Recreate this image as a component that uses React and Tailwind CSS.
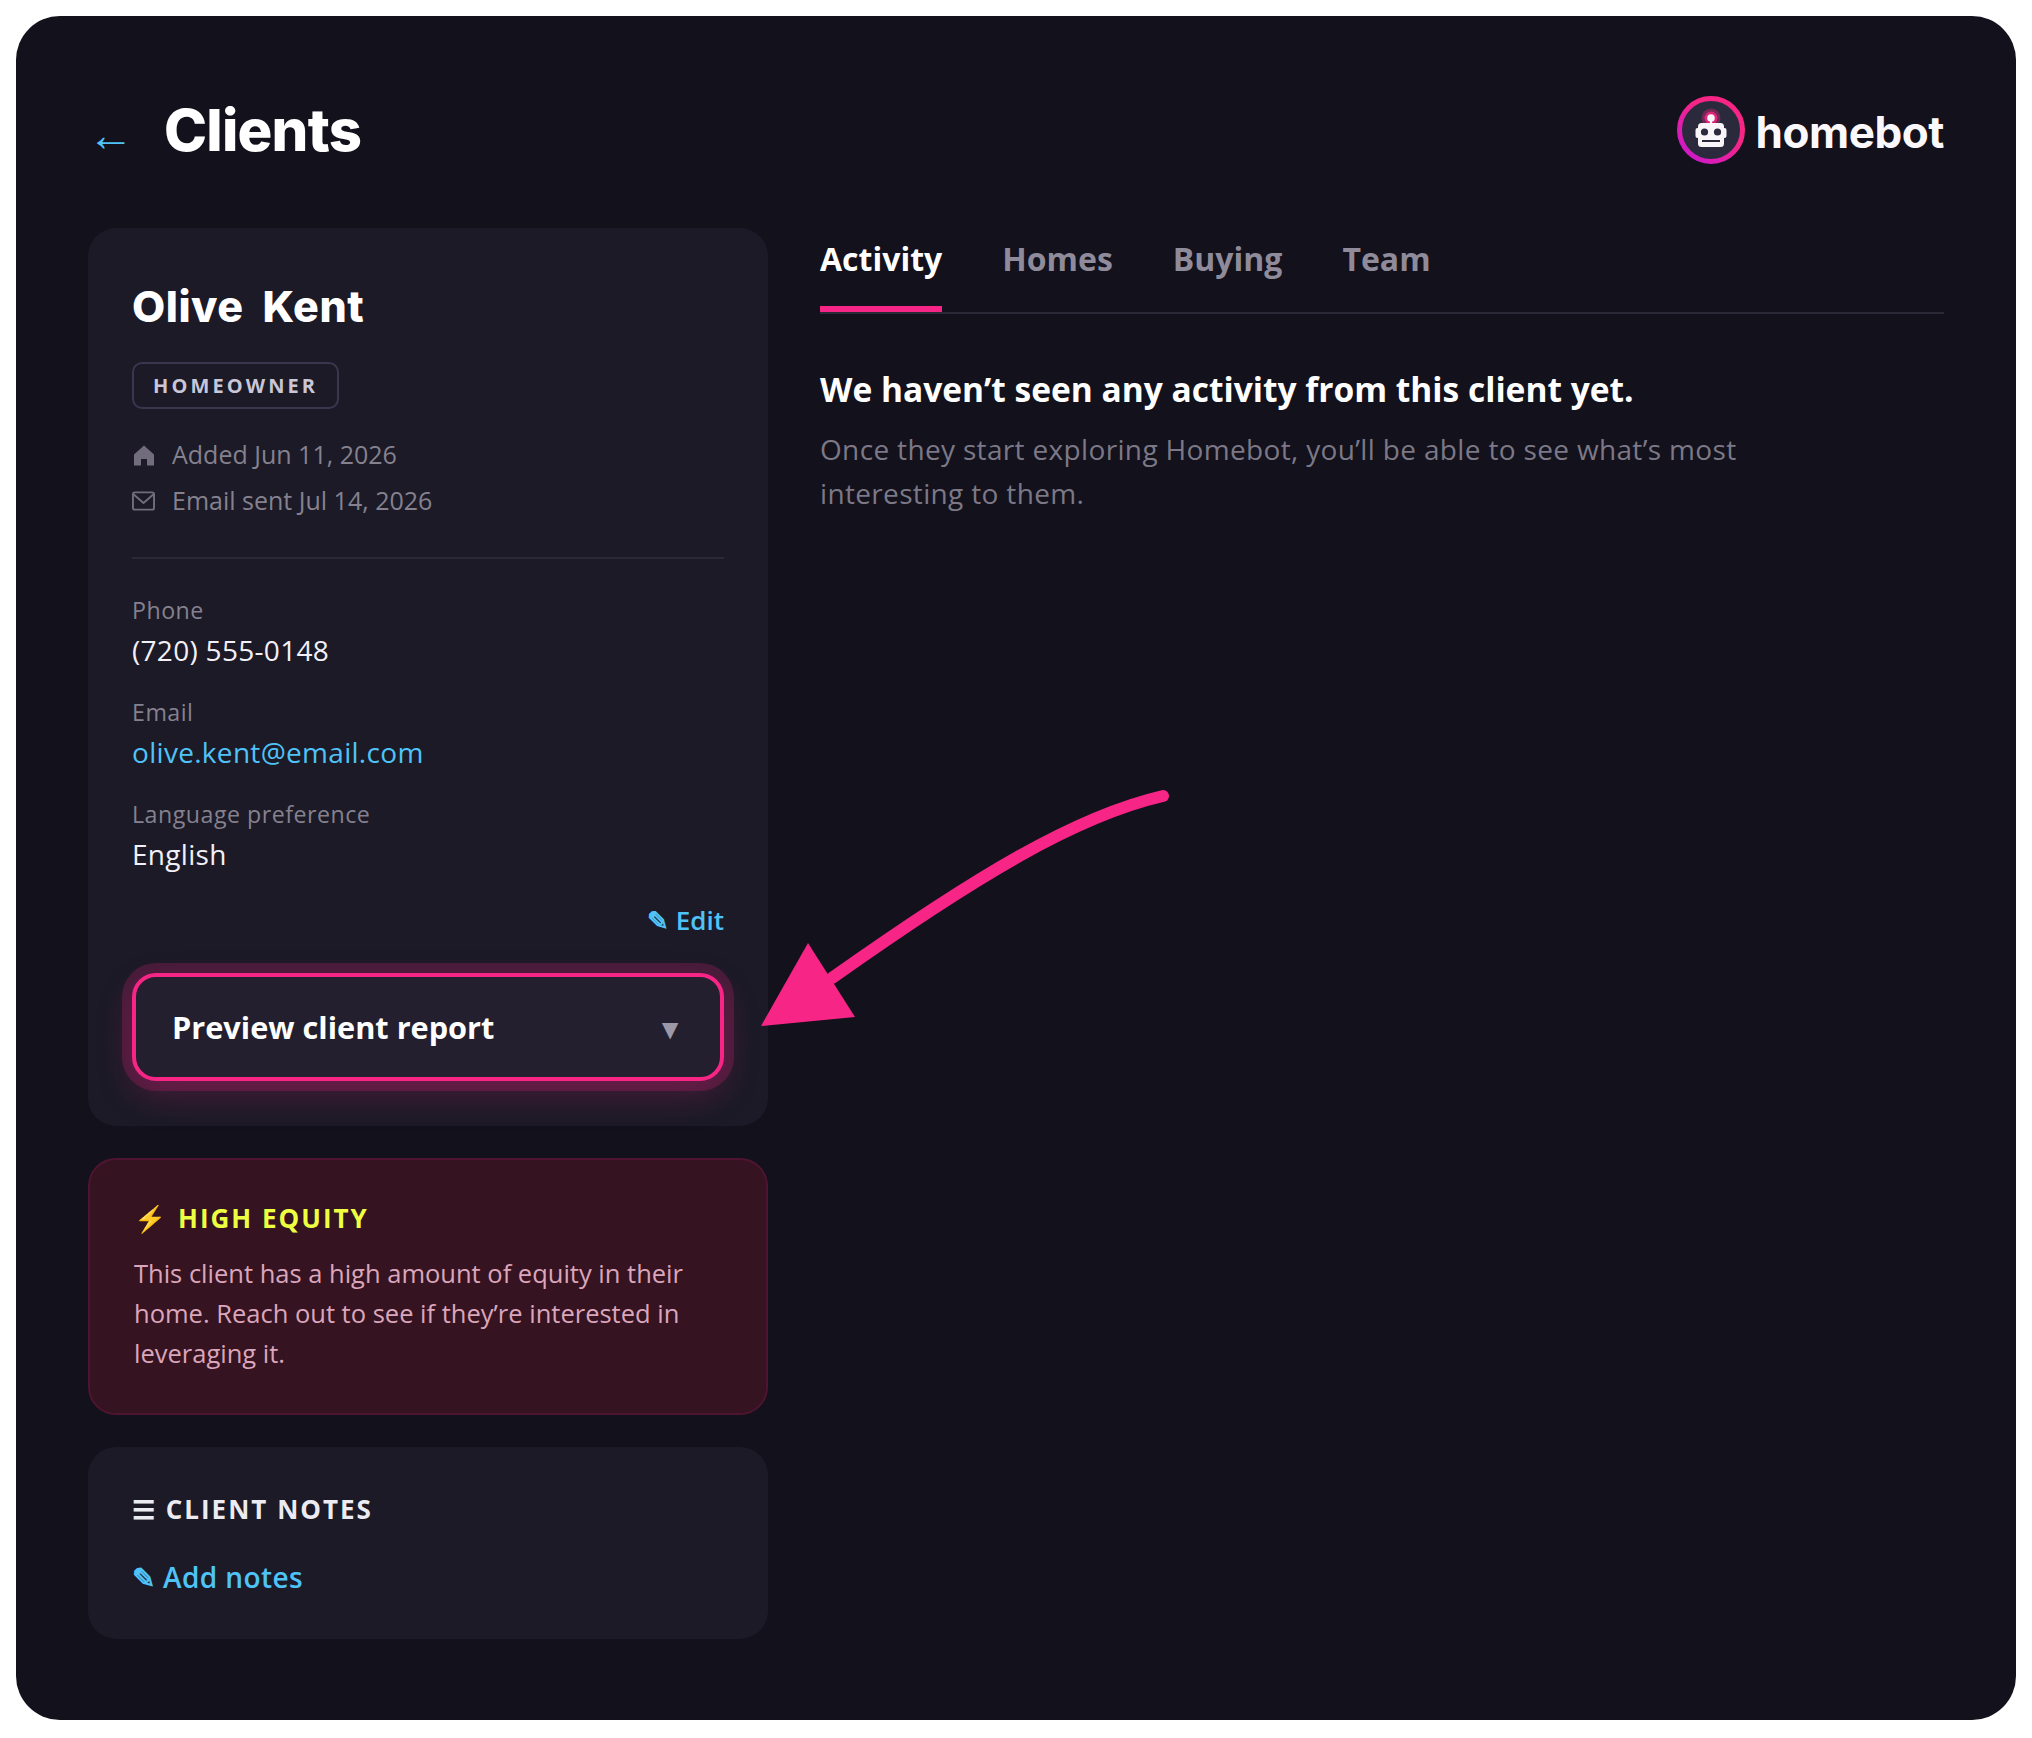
const body = "font-['Open_Sans',sans-serif]";
const display = "font-['Inter',sans-serif]";

function Logo() {
  return (
    <div className="flex items-center gap-[11px]">
      <svg width="68" height="68" viewBox="0 0 68 68">
        <defs>
          <linearGradient id="ring" x1="0.85" y1="0.15" x2="0.2" y2="0.9">
            <stop offset="0.35" stopColor="#f72585" />
            <stop offset="1" stopColor="#d11ac4" />
          </linearGradient>
        </defs>
        <circle cx="34" cy="34" r="31.5" fill="#2b2a3d" stroke="url(#ring)" strokeWidth="5" />
        <circle cx="34" cy="22" r="9.5" fill="#f72585" opacity="0.35" />
        <circle cx="34" cy="22" r="6.5" fill="#f72585" opacity="0.8" />
        <rect x="33" y="22" width="2" height="7" fill="#f8f4f8" />
        <circle cx="34" cy="22" r="3.8" fill="#f8f4f8" />
        <rect x="21" y="27" width="26" height="24" rx="3.5" fill="#f8f4f8" />
        <rect x="18.5" y="32" width="31" height="10" rx="2" fill="#f8f4f8" />
        <circle cx="27.5" cy="36" r="3.6" fill="#2b2a3d" />
        <circle cx="40.5" cy="36" r="3.6" fill="#2b2a3d" />
        <rect x="25" y="44" width="18" height="2" fill="#2b2a3d" />
      </svg>
      <span className={`${display} mt-[3px] text-[44px] leading-none font-bold text-[#fbf8fb] tracking-[-0.45px]`}>homebot</span>
    </div>
  );
}

function Field({ label, children, valueClass = "text-[#f2f0f6]" }) {
  return (
    <div className="flex flex-col">
      <span className="text-[23.2px] leading-[36px] tracking-[0.5px] text-[#85818f]">{label}</span>
      <span className={`text-[28px] leading-[45px] tracking-[0.3px] ${valueClass}`}>{children}</span>
    </div>
  );
}

export default function App() {
  return (
    <div className={`${body} min-h-screen bg-white p-4`}>
      <div className="relative h-[1704px] w-[2000px] rounded-[44px] bg-[#12111c] px-[72px] pt-[64px]">
        <header className="flex h-[100px] items-center justify-between">
          <div className="flex items-center gap-[30px]">
            <span className="mt-[6px] text-[46px] leading-none text-[#4fc3f7]">←</span>
            <h1 className={`${display} text-[58px] leading-none font-extrabold tracking-[-0.8px] text-white`}>Clients</h1>
          </div>
          <Logo />
        </header>

        <div className="mt-[48px] grid grid-cols-[680px_1fr] gap-[52px]">
          <div className="flex flex-col gap-[32px]">
            <section className="h-[898px] rounded-[28px] bg-[#1b1a26] px-[44px] pt-[50px]">
              <h2 className={`${display} text-[43px] leading-[56px] font-extrabold tracking-[0.5px] [word-spacing:9px] text-white`}>Olive Kent</h2>
              <span className="mt-[28px] inline-block h-[47px] rounded-[10px] border-2 border-[#3a3650] px-[19px] text-[20px] leading-[43px] font-bold tracking-[3.1px] text-[#c9c6d8]">
                HOMEOWNER
              </span>
              <div className="mt-[23px] flex flex-col text-[#85818f]">
                <div className="flex h-[46px] items-center gap-[17px] text-[25px]">
                  <span className="flex w-[23px] justify-center">
                    <svg width="22" height="21" viewBox="0 0 22 21" fill="#716d7c">
                      <path d="M11 0.5 21 9.5 V20.5 H14 V14 H8 V20.5 H1 V9.5 Z" />
                    </svg>
                  </span>
                  Added Jun 11, 2026
                </div>
                <div className="flex h-[46px] items-center gap-[17px] text-[25px]">
                  <svg width="24" height="20" viewBox="0 0 24 20" fill="none" stroke="#716d7c" strokeWidth="2" className="w-[23px]">
                    <rect x="1" y="1" width="22" height="18" rx="2" />
                    <path d="M1.5 3 12 12 22.5 3" />
                  </svg>
                  Email sent Jul 14, 2026
                </div>
              </div>
              <div className="mt-[33px] border-t-2 border-[#2b2938] pt-[33px]">
                <div className="flex flex-col gap-[21px]">
                  <Field label="Phone">(720) 555-0148</Field>
                  <Field label="Email" valueClass="text-[#4fc3f7]">olive.kent@email.com</Field>
                  <Field label="Language preference">English</Field>
                </div>
                <div className="mt-[25px] flex justify-end text-[26px] leading-[36px] font-semibold text-[#4fc3f7]">✎ Edit</div>
              </div>
              <button className="mt-[35px] flex h-[108px] w-[592px] items-center justify-between rounded-[24px] border-4 border-[#f72585] bg-[#231f2e] pr-[36px] pl-[36px] shadow-[0_0_0_10px_rgba(247,37,133,0.2),0_14px_36px_rgba(247,37,133,0.22)]">
                <span className="mt-[1px] text-[30.7px] font-bold text-white">Preview client report</span>
                <span className="mt-[2px] text-[28px] text-[#9c98a8]">▼</span>
              </button>
            </section>

            <section className="h-[257px] rounded-[28px] border-2 border-[#4f1530] bg-[#351320] px-[44px] pt-[38px]">
              <div className="flex items-center gap-[10px] text-[26px] leading-[40px] font-bold tracking-[2px] text-[#eeff41]">
                <span>⚡</span>
                <span>HIGH EQUITY</span>
              </div>
              <p className="mt-[15px] text-[25.5px] leading-[40px] text-[#dba6bb]">
                This client has a high amount of equity in their home. Reach out to see if they’re interested in leveraging it.
              </p>
            </section>

            <section className="h-[192px] rounded-[28px] bg-[#1b1a26] px-[44px] pt-[42px]">
              <div className="text-[26px] leading-[40px] font-bold tracking-[2px] text-[#ecebf2]">☰ CLIENT NOTES</div>
              <div className="mt-[28px] text-[28px] leading-[40px] font-semibold tracking-[0.4px] text-[#4fc3f7]">✎ Add notes</div>
            </section>
          </div>

          <div>
            <nav className="flex h-[86px] gap-[60px] border-b-2 border-[#2b2938]">
              <a className="h-[84px] border-b-[6px] border-[#f72585] text-[32px] leading-[62px] font-bold text-white">Activity</a>
              <a className="h-[84px] text-[32px] leading-[62px] font-bold text-[#8f8b9a]">Homes</a>
              <a className="h-[84px] text-[32px] leading-[62px] font-bold text-[#8f8b9a]">Buying</a>
              <a className="h-[84px] text-[32px] leading-[62px] font-bold text-[#8f8b9a]">Team</a>
            </nav>
            <h3 className="mt-[51px] text-[33.5px] leading-[48px] font-bold text-white">We haven’t seen any activity from this client yet.</h3>
            <p className="mt-[14px] w-[960px] text-[28px] leading-[44px] tracking-[0.34px] text-[#7c7886]">
              Once they start exploring Homebot, you’ll be able to see what’s most interesting to them.
            </p>
          </div>
        </div>

        <svg className="absolute top-0 left-0" width="2000" height="1704" fill="none">
          <path d="M1147 780 C1060 800 960 860 816 962" stroke="#f72585" strokeWidth="12" strokeLinecap="round" />
          <polygon points="745,1010 792,927 839,1001" fill="#f72585" />
        </svg>
      </div>
    </div>
  );
}
